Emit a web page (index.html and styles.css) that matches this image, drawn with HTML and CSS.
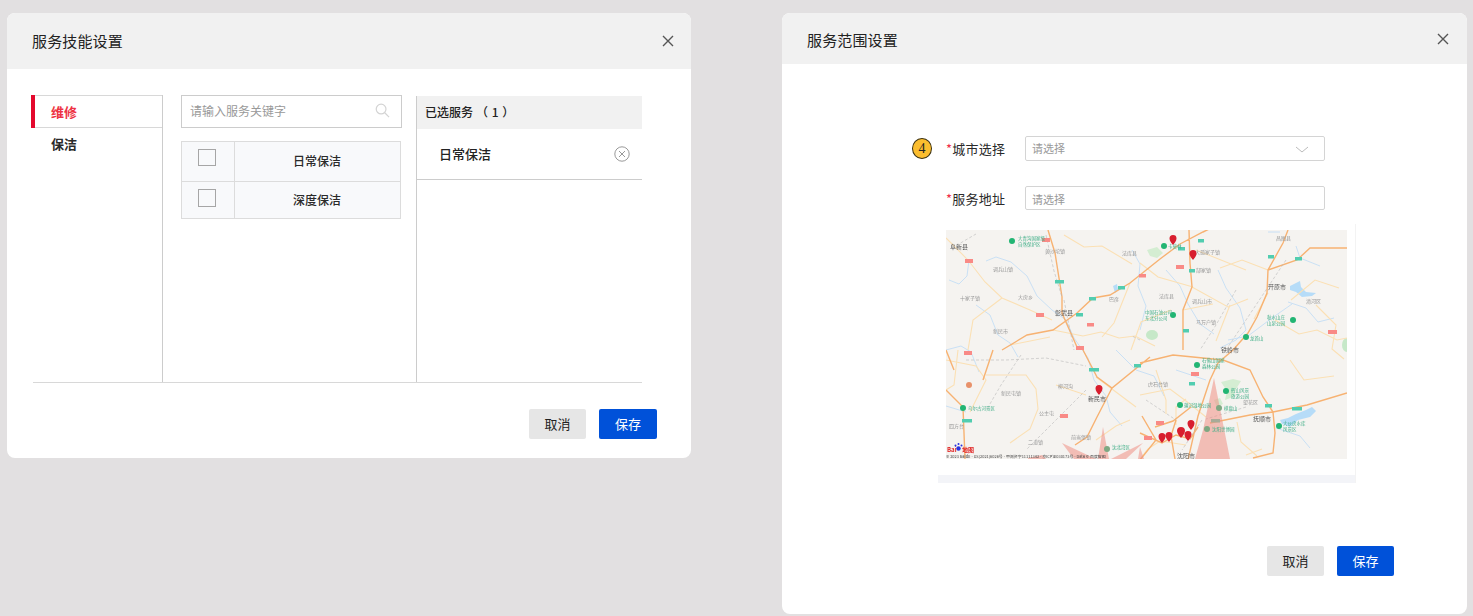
FILE: index.html
```html
<!DOCTYPE html>
<html lang="zh-CN">
<head>
<meta charset="utf-8">
<title>服务设置</title>
<link rel="stylesheet" href="styles.css">
</head>
<body>
<section class="dialog dialog-skill">
  <header class="dialog-head head-tall">
    <h2 class="dialog-title">服务技能设置</h2>
    <svg class="close-icon" viewBox="0 0 12 12"><path d="M1 1L11 11M11 1L1 11"/></svg>
  </header>
  <div class="skill-body">
    <ul class="cat-menu">
      <li class="cat-item cat-active">维修</li>
      <li class="cat-item">保洁</li>
    </ul>
    <div class="picker">
      <div class="search-box">
        <span class="search-text">请输入服务关键字</span>
        <svg class="search-icon" viewBox="0 0 16 16"><circle cx="6.5" cy="6.5" r="5.2"/><path d="M10.4 10.4L15 15"/></svg>
      </div>
      <table class="svc-table">
        <tr class="row-a"><td class="cell-check"><span class="checkbox"></span></td><td class="cell-name">日常保洁</td></tr>
        <tr class="row-b"><td class="cell-check"><span class="checkbox"></span></td><td class="cell-name">深度保洁</td></tr>
      </table>
    </div>
    <div class="chosen">
      <div class="chosen-head">已选服务<span class="chosen-count">（ 1 ）</span></div>
      <div class="chosen-item">
        <span>日常保洁</span>
        <svg class="remove-icon" viewBox="0 0 16 16"><circle cx="8" cy="8" r="7.2"/><path d="M5 5L11 11M11 5L5 11"/></svg>
      </div>
    </div>
  </div>
  <footer class="dialog-foot foot-skill">
    <button class="btn btn-cancel">取消</button>
    <button class="btn btn-save">保存</button>
  </footer>
</section>

<section class="dialog dialog-range">
  <header class="dialog-head head-short">
    <h2 class="dialog-title">服务范围设置</h2>
    <svg class="close-icon" viewBox="0 0 12 12"><path d="M1 1L11 11M11 1L1 11"/></svg>
  </header>
  <div class="range-form">
    <span class="step-badge">4</span>
    <label class="field-label"><em class="req">*</em>城市选择</label>
    <div class="field field-select">
      <span class="field-hint">请选择</span>
      <svg class="chevron" viewBox="0 0 14 7"><path d="M1 1L7 6L13 1"/></svg>
    </div>
    <span></span>
    <label class="field-label"><em class="req">*</em>服务地址</label>
    <div class="field field-input"><span class="field-hint">请选择</span></div>
  </div>
  <div class="map-panel">
    <svg class="map" viewBox="0 0 401 229" width="401" height="229">
      <rect class="m-bg" width="401" height="229"/>
      <ellipse class="m-park" cx="206" cy="105" rx="6" ry="5"/>
      <path class="m-park2" d="M201 20l10-3 6 6-6 5-7-2zM275 152l12-3 8 2-5 8-3 8-8 3 2-9zM268 170l6-2 3 6-6 3z"/>
      <ellipse class="m-park" cx="401" cy="115" rx="5" ry="7"/>
      <path class="m-lake" d="M344 56l6-3 4-2 1 6 5 5 10 1-4 3-10 1-6-5-6-2zM334 190l8-2 8-4 10-4 6-3 4 4-6 6-12 3-8 7-8-3z"/>
      <path class="m-lake" d="M167 56l4-2 1 6-3 3z"/>
      <path class="m-river" d="M0 120l15-4 10 6 8 20M40 31l10-4 15 5 16 14 10 20 15 14 14 10 8 18 14 20 6 22 12 16 4 16 12 14M3 50l10 4 8-8 2-16M30 75l14 10 8 20 12 8 8 14M322 2l12 0M272 40l8 18 14 20 6 22-10 10-16 8M186 20l8 14-2 22 8 20 -6 24M220 40l14 16 8 18 12 20 14 10M342 72l18 6 12 14 16-4M0 176l20 6M170 120l20 20 18 6 10 20M230 140l30 10M330 198l24 8 10 12M282 110l20-4 24-18 20-14M350 16l4 12 20 8"/>
      <path class="m-road-thin" d="M0 8l22 22 17 22 17 16 28 12 22 10M56 68L27 90l-5 30M107 100l30 6 18-4 18 6 16-2 20 10M118 5l20 12 18-1 30 18M184 53l-16 40-12 14M64 115l40-8M12 120l-4 35-8 5M0 130l30 6 10 14-10 20-6 12M40 145l40 0 10 14 2 20 -8 20-20 14M110 155l30 10M150 147l40 30M247 57l-35-10-18-14M246 57l36 20 20-8M225 80l-30 12-10 28M300 40l-20-8-30-12M322 63l-14 26M329 90l24 14 18-4 20 10 10-2M345 70l24-20 24 8M370 75l20 20-4 24 12 10M237 80l30-6M284 75l-14 36M322 40l-26-10-22 8M194 165l30-6 16 12 20 16M210 140l10 30 0 14M150 210l20-14 14-6M291 192l4 20 16 14M344 130l14 20 30-4M300 225l16-6M240 215l-26-4-12 8-8 10M230 195l0-18 10-8"/>
      <path class="m-road" d="M102 0l7 23 7 44 0 16 15 34M56 120l25-15 26-5 24-17 16-15 17-3 20-12 20-16 10-8 20-15 23-12 37-18M243 0l1 33 2 24-9 23 0 40M342 0l-5 13-15 27-1 23-10 24-9 16-15 17-15 13-8 17-12 36-10 44M322 40l29-10 13-12 37 0M194 133l33-8 50 5 27 10 13 27 10 15M264 193l40-8 23-3 34-7 40-12M327 182l2 21-2 20-20 5M137 120l14 27 15 11 38-31M166 158l-15 29-10 20-12 8M0 160l17 17 2 52M194 203l22 10 14-8 14 4 8-12M230 190l-5 16 4 23M194 230l16-20-14-24M245 177l-18 14-18 6M0 120l8 20M47 120l-10 30"/>
      <path class="m-rail" d="M100 5l8 36 8 26M6 18l24-14M118 70l4 20 6 30M290 60l-20 35-16 25M340 30l-40 60-20 30M194 110l-8-4M20 130l40 0 40-2 40 8M75 125l-20 30-14 24M140 160l-40 40-20 20M200 170l30 20M256 190l-20 30M300 177l-40 12"/>
      <g class="m-shields">
        <rect class="s-red" x="96" y="8" width="8" height="4"/><rect class="s-red" x="19" y="29" width="8" height="4"/>
        <rect class="s-green" x="109" y="50" width="9" height="3.5"/><rect class="s-green" x="143" y="67" width="7" height="3.5"/>
        <rect class="s-green" x="172" y="56" width="7" height="3.5"/><rect class="s-red" x="193" y="44" width="7" height="3.5"/>
        <rect class="s-red" x="90" y="83" width="8" height="4"/><rect class="s-green" x="130" y="83" width="7" height="3.5"/>
        <rect class="s-red" x="141" y="93" width="7" height="3.5"/><rect class="s-red" x="130" y="116" width="8" height="4"/>
        <rect class="s-green" x="232" y="17" width="7" height="3.5"/><rect class="s-green" x="252" y="9" width="6" height="3.5"/>
        <rect class="s-red" x="230" y="35" width="8" height="4"/><rect class="s-green" x="243" y="39" width="6" height="3.5"/>
        <rect class="s-green" x="322" y="25" width="6" height="3.5"/><rect class="s-green" x="349" y="27" width="7" height="3.5"/>
        <rect class="s-green" x="237" y="99" width="6" height="3.5"/><rect class="s-red" x="382" y="100" width="9" height="4"/>
        <rect class="s-red" x="18" y="121" width="8" height="4"/><rect class="s-green" x="143" y="138" width="10" height="3.5"/>
        <rect class="s-green" x="16" y="189" width="10" height="3.5"/><rect class="s-red" x="114" y="184" width="8" height="4"/>
        <rect class="s-green" x="188" y="134" width="7" height="3.5"/><rect class="s-red" x="245" y="142" width="8" height="4"/>
        <rect class="s-green" x="243" y="152" width="6" height="3.5"/><rect class="s-green" x="265" y="189" width="9" height="3.5"/>
        <rect class="s-green" x="319" y="174" width="7" height="3.5"/><rect class="s-green" x="346" y="177" width="10" height="3.5"/>
        <rect class="s-red" x="210" y="191" width="8" height="4"/><rect class="s-red" x="198" y="206" width="8" height="4"/>
      </g>
      <path class="m-zone" d="M268 148L284 229H249L257 200ZM116 213L150 229H128ZM157 197L163 229H152ZM197 213L180 229H165ZM82 228L96 225L100 229H82ZM194 217L198 229H192Z"/>
      <g class="m-poi">
        <circle cx="66" cy="11" r="3"/><circle cx="218" cy="16" r="3"/><circle cx="227" cy="85" r="3"/><circle cx="300" cy="107" r="3"/>
        <circle cx="347" cy="90" r="3"/><circle cx="17" cy="178" r="3"/><circle cx="251" cy="135" r="3"/><circle cx="280" cy="161" r="3"/>
        <circle cx="234" cy="175" r="3"/><circle cx="333" cy="196" r="3"/>
        <circle class="poi-dim" cx="161" cy="219" r="3"/><circle class="poi-dim" cx="273" cy="178" r="3"/><circle class="poi-dim" cx="261" cy="199" r="3"/>
        <circle class="poi-orange" cx="23" cy="155" r="3"/>
      </g>
      <g class="m-label">
        <text x="47" y="41">调兵山镇</text><text x="72" y="69">大房乡</text><text x="47" y="103">新民市</text>
        <text x="99" y="23">黄沙坨镇</text><text x="176" y="25">法库县</text><text x="163" y="71">巴彦</text>
        <text x="14" y="70">十家子镇</text><text x="213" y="68">法库县</text><text x="246" y="73">调兵山市</text><text x="249" y="24">大孤家子镇</text>
        <text x="250" y="42">郜家镇</text><text x="250" y="94">马万户镇</text><text x="330" y="10">昌图县</text>
        <text x="360" y="73">清河区</text><text x="55" y="165">新民屯镇</text><text x="112" y="158">柳河沟</text><text x="93" y="185">公主屯</text>
        <text x="82" y="214">二道镇</text><text x="125" y="209">前当堡镇</text><text x="202" y="156">虎石台镇</text><text x="297" y="174">望花区</text>
        <text x="3" y="198">四方台</text>
      </g>
      <g class="m-label m-label-strong">
        <text x="4" y="19">阜新县</text><text x="109" y="85">彰武县</text><text x="142" y="171">新民市</text>
        <text x="275" y="122">铁岭市</text><text x="307" y="191">抚顺市</text><text x="322" y="59">开原市</text><text x="231" y="228">沈阳市</text>
      </g>
      <g class="m-poi-label">
        <text x="72" y="10">大青沟国家级</text><text x="72" y="16">自然保护区</text><text x="222" y="18">卡莫林</text><text x="199" y="84">中国石油公司</text>
        <text x="199" y="90">东北分公司</text><text x="304" y="110">龙首山</text><text x="321" y="89">秋水山庄</text><text x="321" y="95">山泉公园</text>
        <text x="22" y="180">乌尔古河景区</text><text x="256" y="132">石佛山国家</text><text x="256" y="138">森林公园</text><text x="285" y="162">辉山风景</text>
        <text x="285" y="168">旅游公园</text><text x="238" y="177">蒲河湿地公园</text><text x="278" y="180">棋盘山</text><text x="266" y="201">沈阳世博园</text>
        <text x="337" y="195">大伙房水库</text><text x="337" y="201">风景区</text><text x="166" y="219">沈北湾区</text>
      </g>
      <g class="m-pins">
        <path d="M227 5a3.500 3.500 0 0 1 3.500 3.500c0 2.500-2 4.500-3.500 6.500-1.500-2-3.500-4-3.500-6.500a3.500 3.500 0 0 1 3.500-3.500zM247 20a3.500 3.500 0 0 1 3.500 3.500c0 2.500-2 4.500-3.500 6.500-1.500-2-3.500-4-3.500-6.500a3.500 3.500 0 0 1 3.500-3.500zM153 155a3.500 3.500 0 0 1 3.500 3.500c0 2.500-2 4.500-3.500 6.500-1.500-2-3.500-4-3.500-6.500a3.500 3.500 0 0 1 3.500-3.500zM245 190a3.500 3.500 0 0 1 3.500 3.500c0 2.500-2 4.500-3.500 6.500-1.500-2-3.500-4-3.500-6.500a3.500 3.500 0 0 1 3.500-3.500zM235 197a4 4 0 0 1 4 4c0 2.500-2.500 5-4 7-1.500-2-4-4.500-4-7a4 4 0 0 1 4-4zM242 201a3.500 3.500 0 0 1 3.500 3.500c0 2.500-2 4.500-3.500 6.500-1.500-2-3.500-4-3.500-6.500a3.500 3.500 0 0 1 3.500-3.500zM223 202a3.500 3.500 0 0 1 3.500 3.500c0 2.500-2 4.500-3.500 6.500-1.500-2-3.500-4-3.500-6.500a3.500 3.500 0 0 1 3.500-3.500zM216 203a3.500 3.500 0 0 1 3.500 3.500c0 2.500-2 4.500-3.500 6.500-1.500-2-3.500-4-3.500-6.500a3.500 3.500 0 0 1 3.500-3.500z"/>
      </g>
      <g class="m-logo">
        <text class="logo-red" x="1" y="222">Bai</text>
        <circle class="logo-paw" cx="12.500" cy="218.500" r="2.200"/><circle class="logo-paw" cx="9.500" cy="215.500" r="1"/><circle class="logo-paw" cx="12.500" cy="214" r="1"/><circle class="logo-paw" cx="15.500" cy="215.500" r="1"/>
        <text class="logo-red" x="16" y="222">地图</text>
      </g>
      <text class="m-copy" x="0" y="227.500">© 2023 Baidu - GS(2021)6026号 - 甲测资字11111342 - 京ICP证030173号 - Data © 百度智图</text>
    </svg>
    <div class="panel-strip"></div>
  </div>
  <footer class="dialog-foot foot-range">
    <button class="btn btn-cancel">取消</button>
    <button class="btn btn-save">保存</button>
  </footer>
</section>
</body>
</html>
```
FILE: styles.css
```css
* { box-sizing: border-box; }
html, body { margin: 0; height: 100%; }
body {
  background: #e2e0e1;
  display: flex;
  justify-content: space-between;
  align-items: flex-start;
  padding: 13px 6px 0 7px;
  overflow: hidden;
  font-family: "Noto Sans CJK SC", "Noto Sans", sans-serif;
  color: #222;
}
.dialog { background: #fff; border-radius: 8px; overflow: hidden; }
.dialog-skill { width: 684px; height: 445px; }
.dialog-range { width: 685px; height: 601px; }
.dialog-head {
  background: #f1f1f1;
  display: flex;
  align-items: center;
  justify-content: space-between;
}
.head-tall { height: 56px; padding: 0 17px 0 25px; }
.head-short { height: 51px; padding: 0 18px 0 25px; }
.dialog-title { margin: 0; font-size: 15px; font-weight: 400; line-height: 20px; color: #222; letter-spacing: 0.15px; }
.head-short .dialog-title { margin-top: 2px; }
.close-icon { width: 12px; height: 12px; fill: none; stroke: #555; stroke-width: 1.4; }

.skill-body {
  display: flex;
  margin: 26px 49px 0 26px;
  height: 288px;
  border-bottom: 1px solid #d8d8d8;
}
.cat-menu { list-style: none; margin: 0; padding: 0; width: 130px; border-right: 1px solid #ccc; }
.cat-item { height: 33px; line-height: 31px; padding-left: 18px; font-size: 13px; font-weight: 700; position: relative; color: #2a2a2a; }
.cat-active { color: #ee3344; border-top: 1px solid #d8d8d8; border-bottom: 1px solid #d8d8d8; }
.cat-active::before {
  content: "";
  position: absolute;
  left: -2px;
  top: -1px;
  bottom: -1px;
  width: 3.5px;
  background: #e4092d;
}
.picker { width: 253px; padding-left: 18px; }
.search-box {
  width: 221px;
  height: 33px;
  border: 1px solid #ccc;
  display: flex;
  align-items: center;
  justify-content: space-between;
  padding: 0 11px 2px 9px;
}
.search-text { font-size: 12px; color: #999; margin-left: -1px; }
.search-icon { width: 15px; height: 15px; fill: none; stroke: #d4d4d4; stroke-width: 1.3; }
.svc-table { border-collapse: collapse; width: 220px; margin-top: 13px; background: #f8f9fb; table-layout: fixed; }
.svc-table td { border: 1px solid #dcdcdc; padding: 0; text-align: center; }
.svc-table .cell-name { padding: 0 1px 2px 0; }
.row-a { height: 40px; }
.row-b { height: 37px; }
.cell-check { width: 53px; }
.checkbox { display: block; width: 18px; height: 17px; border: 1px solid #a6a6a6; background: #f8f9fb; margin: 0 0 8px 16px; }
.row-b .checkbox { height: 18px; margin-bottom: 5px; }
.cell-name { font-size: 12px; font-weight: 500; color: #2a2a2a; }
.chosen { width: 226px; border-left: 1px solid #ccc; margin-top: 1px; }
.chosen-head { height: 33px; line-height: 31px; background: #f1f1f1; padding-left: 8px; font-size: 12px; font-weight: 500; }
.chosen-count { margin-left: 3px; word-spacing: 1px; }
.chosen-item {
  height: 51px;
  display: flex;
  align-items: center;
  justify-content: space-between;
  padding: 0 12px 2px 22px;
  border-bottom: 1px solid #ccc;
  font-size: 13px;
  font-weight: 500;
}
.remove-icon { width: 16px; height: 16px; fill: none; stroke: #999; stroke-width: 1; margin-top: 1px; }
.dialog-foot { display: flex; justify-content: flex-end; gap: 13px; }
.foot-skill { margin-top: 26px; padding-right: 34px; }
.foot-range { margin-top: 63px; padding-right: 73px; }
.btn {
  width: 57px;
  height: 30px;
  border: 0;
  border-radius: 2px;
  padding: 0 0 2px;
  font: 13px "Noto Sans CJK SC", "Noto Sans", sans-serif;
}
.btn-cancel { background: #e6e6e6; color: #222; }
.btn-save { background: #0051d9; color: #fff; width: 58px; }
.foot-range .btn-save { width: 57px; }

.range-form {
  display: grid;
  grid-template-columns: 34px 79px 300px;
  grid-template-rows: 25px 24px;
  row-gap: 25px;
  align-items: center;
  margin: 72px 0 0 130px;
}
.step-badge {
  width: 20px;
  height: 21px;
  border-radius: 50%;
  background: #fbbd2e;
  border: 1px solid #3a3010;
  font: 14px/19px "Liberation Serif", serif;
  text-align: center;
  color: #222;
}
.field-label { font-size: 13px; color: #2a2a2a; letter-spacing: 0.2px; }
.req { font-style: normal; color: #f0304a; }
.field {
  height: 100%;
  border: 1px solid #d4d4d4;
  border-radius: 2px;
  padding: 0 15px 0 6px;
  display: flex;
  align-items: center;
  justify-content: space-between;
}
.field-select { padding-bottom: 1px; }
.field-input { padding-top: 1px; }
.field-hint { font-size: 11px; color: #999; }
.chevron { width: 14px; height: 7px; fill: none; stroke: #bbb; stroke-width: 1; margin-top: 3px; }
.map-panel {
  width: 418px;
  margin: 14px 0 0 156px;
  padding-top: 6px;
  padding-left: 8px;
  border-right: 1px solid #f3f3f3;
}
.map { display: block; filter: blur(0.4px); }
.panel-strip { height: 8px; margin: 16px 0 0 -8px; background: #f3f4f8; }

.m-bg { fill: #f5f3f0; }
.m-park { fill: #c6e8c8; }
.m-park2 { fill: #d4edd2; }
.m-lake { fill: #b6dcf8; }
.m-river { fill: none; stroke: #c4def5; stroke-width: 0.9; }
.m-road-thin { fill: none; stroke: #fbe0b4; stroke-width: 1.1; }
.m-road { fill: none; stroke: #f7b272; stroke-width: 1.4; }
.m-rail { fill: none; stroke: #b9b9b9; stroke-width: 0.6; stroke-dasharray: 3 2; }
.s-red { fill: #f98a86; }
.s-green { fill: #52cdb0; }
.m-zone { fill: #ef8f85; opacity: 0.55; }
.m-poi circle { fill: #22b573; }
.m-poi .poi-dim { fill: #7ea882; }
.m-poi .poi-orange { fill: #e8916a; }
.m-label text { font-size: 5px; fill: #999; }
.m-label-strong text { font-size: 6px; fill: #555; }
.m-poi-label text { font-size: 4.500px; fill: #3fae87; }
.m-pins path { fill: #d81e2e; }
.logo-red { font-size: 6px; font-weight: 700; fill: #e02020; }
.logo-paw { fill: #2932e1; }
.m-copy { font-size: 3.950px; fill: #444; }
```
